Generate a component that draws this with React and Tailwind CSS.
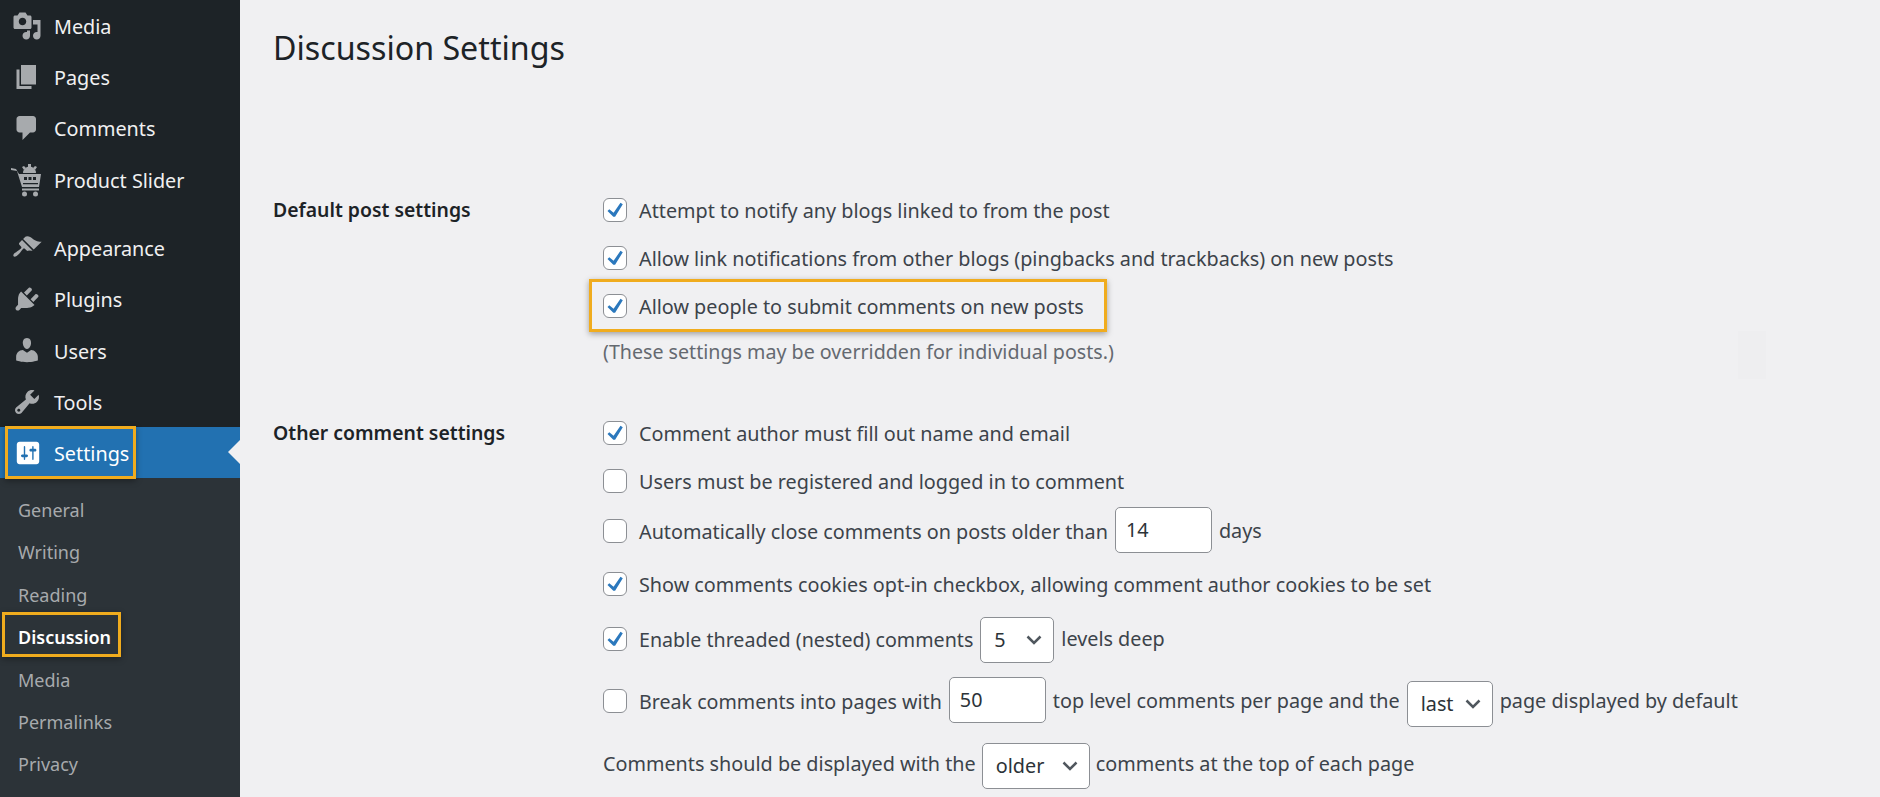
import React from "react";

const font = "font-['Noto_Sans','Open_Sans',sans-serif]";

const Dash = ({ d, size = "w-[30px] h-[30px]", fill = "#a7aaad" }) => (
  <svg viewBox="0 0 20 20" className={size} fill={fill}>
    <path fillRule="evenodd" d={d} />
  </svg>
);

const MediaIcon = () => (
  <Dash d="M13 11V4c0-.55-.45-1-1-1h-1.670L9 1H5L3.670 3H2c-.55 0-1 .45-1 1v7c0 .55.45 1 1 1h10c.55 0 1-.45 1-1zM7 4.500c1.380 0 2.500 1.120 2.500 2.500S8.380 9.500 7 9.500 4.500 8.380 4.500 7 5.620 4.500 7 4.500zM14 6h5v10.500c0 1.380-1.120 2.500-2.500 2.500S14 17.880 14 16.500s1.120-2.500 2.500-2.500c.17 0 .34.020.5.050V9h-3V6zm-4 8.050V13h2v3.500c0 1.380-1.120 2.500-2.500 2.500S7 17.880 7 16.500 8.120 14 9.500 14c.17 0 .34.020.5.050z" />
);
const PagesIcon = () => <Dash d="M6 15V2h10v13H6zm-1 1h8v2H3V5h2v11z" />;
const CommentsIcon = () => (
  <Dash d="M5 2h9c1.100 0 2 .9 2 2v7c0 1.100-.9 2-2 2h-2l-5 5v-5H5c-1.100 0-2-.9-2-2V4c0-1.100.9-2 2-2z" />
);
const AppearanceIcon = () => (
  <Dash d="M14.480 11.060L7.410 3.990l1.500-1.500c.5-.56 2.300-.47 3.510.32 1.210.8 1.430 1.280 2.910 2.100 1.180.64 2.450 1.260 4.450.85zm-.71.71L6.700 4.700 4.930 6.470c-.39.39-.39 1.020 0 1.410l1.060 1.060c.39.39.39 1.030 0 1.420-.6.6-1.430 1.110-2.210 1.690-.35.26-.7.53-1.010.84C1.430 13.230.4 14.850 1.100 15.550c.7.7 2.330-.32 3.680-1.670.31-.31.58-.66.84-1.010.58-.78 1.090-1.610 1.690-2.210.39-.39 1.030-.39 1.420 0l1.060 1.060c.39.39 1.020.39 1.410 0z" />
);
const PluginsIcon = () => (
  <Dash d="M13.110 4.360L9.870 7.600 8 5.730l3.240-3.240c.35-.34 1.050-.2 1.560.32.52.51.66 1.210.31 1.550zm-8 1.770l.91-1.120 9.010 9.010-1.190.84c-.71.71-2.630 1.160-3.820 1.160H6.140L4.900 17.260c-.59.59-1.540.59-2.120 0-.59-.58-.59-1.530 0-2.120l1.240-1.240v-3.880c0-1.130.4-3.190 1.090-3.890zm7.260 3.970l3.240-3.240c.34-.35 1.040-.21 1.550.31.52.51.66 1.210.31 1.550l-3.240 3.250z" />
);
const UsersIcon = () => (
  <Dash d="M10 9.250c-2.270 0-2.730-3.440-2.730-3.440C7 4.020 7.820 2 9.970 2c2.160 0 2.980 2.020 2.710 3.810 0 0-.41 3.440-2.680 3.440zm0 2.570L12.720 10c2.390 0 4.520 2.330 4.520 4.530v2.490s-3.650 1.130-7.240 1.130c-3.650 0-7.240-1.130-7.240-1.130v-2.490c0-2.250 1.940-4.480 4.470-4.480z" />
);
const ToolsIcon = () => (
  <Dash d="M16.680 9.770c-1.340 1.340-3.300 1.670-4.950.99l-5.410 6.520c-.99.99-2.590.99-3.580 0s-.99-2.590 0-3.570l6.520-5.420c-.68-1.650-.35-3.610.99-4.950 1.280-1.280 3.120-1.620 4.720-1.060l-2.890 2.890 2.820 2.820 2.860-2.870c.53 1.580.18 3.390-1.080 4.650zM3.810 16.210c.4.39 1.040.39 1.430 0 .4-.4.4-1.040 0-1.430-.39-.4-1.030-.4-1.430 0-.39.39-.39 1.030 0 1.430z" />
);
const SettingsIcon = () => (
  <Dash
    size="w-[28px] h-[28px]"
    fill="#fff"
    d="M18 16V4c0-1.100-.9-2-2-2H4c-1.100 0-2 .9-2 2v12c0 1.100.9 2 2 2h12c1.100 0 2-.9 2-2zM8 11h1c.55 0 1 .45 1 1s-.45 1-1 1H8v1.500c0 .28-.22.5-.5.5s-.5-.22-.5-.5V13H6c-.55 0-1-.45-1-1s.45-1 1-1h1V5.500c0-.28.22-.5.5-.5s.5.22.5.5V11zm5-2h-1c-.55 0-1-.45-1-1s.45-1 1-1h1V5.500c0-.28.22-.5.5-.5s.5.22.5.5V7h1c.55 0 1 .45 1 1s-.45 1-1 1h-1v5.500c0 .28-.22.5-.5.5s-.5-.22-.5-.5V9z"
  />
);

const CartIcon = () => (
  <svg viewBox="0 0 34 34" className="w-[34px] h-[34px]" fill="#a7aaad">
    <path d="M1 5l5 1 3 5h22l-2 13H12L7 8 1 7z" />
    <path d="M12 25.500h17v2H12z" />
    <circle cx="14.500" cy="31" r="2.500" />
    <circle cx="25.500" cy="31" r="2.500" />
    <path d="M13 10a6.500 6.500 0 0 1 13 0z" />
    <path d="M18 1h3v3h-3zM12 4l2-1 2 2-2 2zM27 4l-2-1-2 2 2 2z" />
    <path d="M14 14h3v3h-3zM18.500 14h3v3h-3zM23 14h3v3h-3zM13 20h15v1.200H13z" fill="#1d2327" />
  </svg>
);

const mainMenu = [
  { label: "Media", icon: <MediaIcon /> },
  { label: "Pages", icon: <PagesIcon /> },
  { label: "Comments", icon: <CommentsIcon /> },
  { label: "Product Slider", icon: <CartIcon />, gap: true },
  { label: "Appearance", icon: <AppearanceIcon /> },
  { label: "Plugins", icon: <PluginsIcon /> },
  { label: "Users", icon: <UsersIcon /> },
  { label: "Tools", icon: <ToolsIcon /> },
];

const subMenu = ["General", "Writing", "Reading", "Discussion", "Media", "Permalinks", "Privacy"];

const Checkbox = ({ checked }) => (
  <span className="w-6 h-6 shrink-0 rounded-[6px] border border-[#8c8f94] bg-white flex items-center justify-center">
    {checked && (
      <svg viewBox="0 0 20 20" className="w-[20px] h-[20px]" fill="#2b78bd">
        <path d="M15.500 2.800l2.300 1.400-7.700 12.600H8.300L2.500 11l1.800-1.800 4.300 3.600z" />
      </svg>
    )}
  </span>
);

const NumberInput = ({ value, className }) => (
  <span className={`w-[97px] h-[46px] rounded-[5px] border border-[#8c8f94] bg-white flex items-center pl-[10px] text-[#2c3338] ${className}`}>
    {value}
  </span>
);

const Select = ({ value, className }) => (
  <span className={`h-[46px] rounded-[5px] border border-[#8c8f94] bg-white flex items-center justify-between pl-[13px] pr-[11px] text-[#2c3338] ${className}`}>
    {value}
    <svg viewBox="0 0 16 10" className="w-4 h-[10px]" fill="none" stroke="#50575e" strokeWidth="2.500">
      <path d="M1.500 1.500L8 8l6.500-6.500" />
    </svg>
  </span>
);

const Row = ({ className, children }) => (
  <div className={`flex items-center ${className}`}>{children}</div>
);

const Text = ({ className = "", children }) => (
  <span className={`pt-[2px] ${className}`}>{children}</span>
);

const Highlight = ({ className }) => (
  <div className={`absolute border-[3px] border-[#f0ac1e] shadow-[0_2px_6px_rgba(0,0,0,0.35)] ${className}`}></div>
);

export default function App() {
  return (
    <div className={`${font} relative flex h-[797px] w-[1880px] overflow-hidden bg-[#f0f0f2]`}>
      {/* SIDEBAR */}
      <div className="w-[240px] shrink-0 flex flex-col bg-[#1d2327]">
        {mainMenu.map((item) => (
          <div
            key={item.label}
            className={`flex items-center h-[51.300px] shrink-0 ${item.gap ? "mb-[17px]" : ""}`}
          >
            <span className={`w-[54px] shrink-0 flex items-center ${item.gap ? "pl-[10px]" : "pl-3"}`}>{item.icon}</span>
            <span className="text-[19.800px] text-[#f0f0f1] pt-[2px]">{item.label}</span>
          </div>
        ))}
        <div className="relative flex items-center h-[51px] shrink-0 bg-[#2271b1]">
          <span className="w-[54px] pl-[14px] shrink-0 flex items-center"><SettingsIcon /></span>
          <span className="text-[19.800px] text-white pt-[2px]">Settings</span>
          <span className="absolute right-0 top-[13px] border-y-[12px] border-r-[12px] border-y-transparent border-r-[#f0f0f2]"></span>
        </div>
        <div className="flex-1 bg-[#2c3338] pt-[11px] flex flex-col">
          {subMenu.map((name) => (
            <div
              key={name}
              className={`h-[42.400px] shrink-0 flex items-center pl-[18px] text-[18px] ${
                name === "Discussion" ? "font-semibold text-white" : "text-[#a7aaad]"
              }`}
            >
              {name}
            </div>
          ))}
        </div>
      </div>

      {/* MAIN */}
      <div className="flex-1 pl-[33px] text-[19.800px] text-[#3c434a]">
        <h1 className="text-[32.200px] leading-[40px] mt-[28px] text-[#1d2327]">Discussion Settings</h1>

        <div className="flex mt-[128px]">
          <div className="w-[330px] shrink-0 font-semibold text-[19.400px] text-[#1d2327] leading-[28px]">Default post settings</div>
          <div className="flex flex-col">
            <Row className="gap-3 h-[28px]"><Checkbox checked /><Text>Attempt to notify any blogs linked to from the post</Text></Row>
            <Row className="gap-3 h-[28px] mt-[20px]"><Checkbox checked /><Text>Allow link notifications from other blogs (pingbacks and trackbacks) on new posts</Text></Row>
            <Row className="gap-3 h-[28px] mt-[20px]"><Checkbox checked /><Text>Allow people to submit comments on new posts</Text></Row>
            <div className="h-[28px] mt-[17px] text-[19.650px] text-[#646970]">(These settings may be overridden for individual posts.)</div>
          </div>
        </div>

        <div className="flex mt-[54px]">
          <div className="w-[330px] shrink-0 font-semibold text-[19.400px] text-[#1d2327] leading-[28px]">Other comment settings</div>
          <div className="flex flex-col">
            <Row className="gap-3 h-[28px]"><Checkbox checked /><Text>Comment author must fill out name and email</Text></Row>
            <Row className="gap-3 h-[28px] mt-[20px]"><Checkbox /><Text>Users must be registered and logged in to comment</Text></Row>
            <Row className="gap-[7px] h-[46px] mt-[13px]">
              <Checkbox /><Text className="ml-[5px]">Automatically close comments on posts older than</Text>
              <NumberInput value="14" className="mb-[2px]" /><span>days</span>
            </Row>
            <Row className="gap-3 h-[28px] mt-[16px]"><Checkbox checked /><Text>Show comments cookies opt-in checkbox, allowing comment author cookies to be set</Text></Row>
            <Row className="gap-[7px] h-[46px] mt-[18px]">
              <Checkbox checked /><Text className="ml-[5px] text-[19.650px]">Enable threaded (nested) comments</Text>
              <Select value="5" className="w-[74px] mt-[2px]" /><span>levels deep</span>
            </Row>
            <Row className="gap-[7px] h-[46px] mt-[16px]">
              <Checkbox /><Text className="ml-[5px] text-[19.650px]">Break comments into pages with</Text>
              <NumberInput value="50" className="mb-[2px]" /><span>top level comments per page and the</span>
              <Select value="last" className="w-[86px] mt-[6px]" /><span>page displayed by default</span>
            </Row>
            <Row className="gap-[6px] h-[46px] mt-[17px]">
              <span>Comments should be displayed with the</span>
              <Select value="older" className="w-[108px] mt-[4px]" /><span>comments at the top of each page</span>
            </Row>
          </div>
        </div>
      </div>

      {/* ANNOTATION BOXES */}
      <Highlight className="left-[5px] top-[426px] w-[131px] h-[53px]" />
      <Highlight className="left-[2px] top-[612px] w-[119px] h-[45px]" />
      <Highlight className="left-[589px] top-[279px] w-[518px] h-[53px]" />
      {/* faint smudge in the screenshot */}
      <div className="absolute left-[1738px] top-[331px] w-[28px] h-[48px] bg-[#eeeef0]"></div>
    </div>
  );
}
